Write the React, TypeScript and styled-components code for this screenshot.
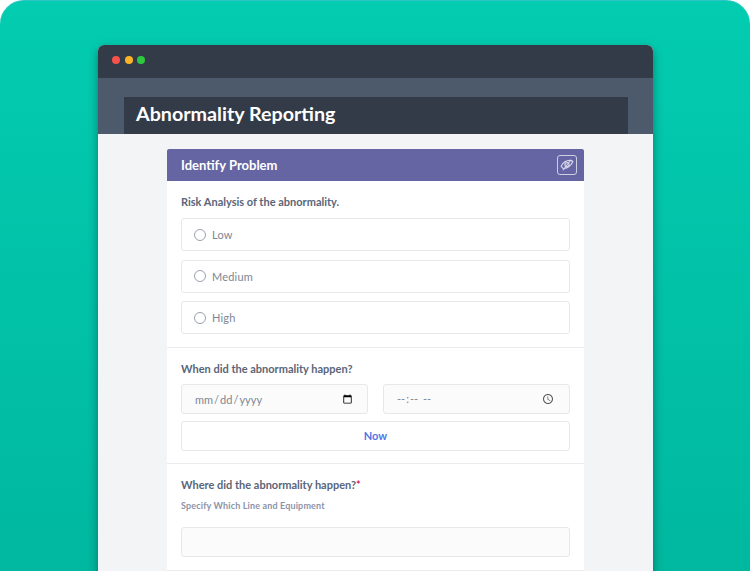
import styled, { createGlobalStyle } from "styled-components"

const GlobalStyle = createGlobalStyle`
  html, body {
    margin: 0;
    height: 100%;
    background: #fff;
    font-family: Lato, "Open Sans", sans-serif;
    overflow: hidden;
  }
`

const Stage = styled.div`
  width: 750px;
  height: 571px;
  box-sizing: border-box;
  padding: 45px 97px 0 98px;
  overflow: hidden;
  border-radius: 24px 24px 0 0;
  border-top: 1px solid #2cc4c4;
  background: linear-gradient(180deg, #03ccb0 0%, #00b89f 100%);
`

const Window = styled.div`
  margin-top: -1px;
  height: 560px;
  border-radius: 6px 6px 0 0;
  background: #f3f4f6;
  box-shadow: 0 4px 10px rgba(0, 50, 50, 0.5);
  overflow: hidden;
`

const TitleBar = styled.div`
  height: 33px;
  box-sizing: border-box;
  padding: 0 0 4px 14px;
  display: flex;
  align-items: center;
  gap: 4.5px;
  background: #323b47;
`

const Dot = styled.span<{ color: string }>`
  width: 8px;
  height: 8px;
  border-radius: 50%;
  background: ${(props) => props.color};
`

const Header = styled.div`
  height: 56px;
  box-sizing: border-box;
  padding: 19px 25px 0 26px;
  background: #4c5a6c;
`

const PageTitle = styled.h1`
  margin: 0;
  height: 37px;
  padding: 0 12px;
  line-height: 34px;
  font-size: 19.7px;
  font-weight: 700;
  color: #fff;
  background: #323b47;
`

const Content = styled.div`
  padding: 15px 69px 0;
`

const Card = styled.div`
  width: 417px;
  background: #fff;
`

const CardHeader = styled.div`
  height: 32px;
  box-sizing: border-box;
  padding: 0 7px 0 14px;
  display: flex;
  align-items: center;
  justify-content: space-between;
  border-radius: 2px 2px 0 0;
  background: #6665a3;
  color: #fff;
  font-size: 13px;
  font-weight: 700;
`

const IconButton = styled.span`
  width: 20px;
  height: 20px;
  box-sizing: border-box;
  display: flex;
  align-items: center;
  justify-content: center;
  border: 1px solid #cfcfe4;
  border-radius: 3px;
  color: #d6d6e8;
`

const Section = styled.div<{ $pad: string }>`
  padding: ${(props) => props.$pad};
  border-bottom: 1px solid #e9ebee;
`

const Question = styled.div<{ $gap: number }>`
  margin-bottom: ${(props) => props.$gap}px;
  line-height: 14px;
  font-size: 11px;
  font-weight: 700;
  color: #5a6578;
`

const Required = styled.span`
  color: #e0245e;
`

const Hint = styled.div`
  margin-bottom: 15px;
  line-height: 12px;
  font-size: 9px;
  font-weight: 700;
  letter-spacing: 0.15px;
  color: #8d93a8;
`

const Options = styled.div`
  display: flex;
  flex-direction: column;
  gap: 8.5px;
`

const Option = styled.label`
  height: 33px;
  box-sizing: border-box;
  padding-left: 12px;
  display: flex;
  align-items: center;
  gap: 6px;
  border: 1px solid #e6e8eb;
  border-radius: 3px;
  font-size: 11px;
  letter-spacing: 0.2px;
  color: #7d8694;
`

const Radio = styled.span`
  width: 12px;
  height: 12px;
  box-sizing: border-box;
  border: 1px solid #9aa2ac;
  border-radius: 50%;
`

const Row = styled.div`
  display: grid;
  grid-template-columns: 187px 187px;
  justify-content: space-between;
  margin-bottom: 7px;
`

const Field = styled.input`
  width: 100%;
  height: 30px;
  box-sizing: border-box;
  padding: 0 12px;
  display: block;
  border: 1px solid #e6e8eb;
  border-radius: 3px;
  background: #fbfbfb;
  font-family: Lato, sans-serif;
  font-size: 11px;
  color: #7d8694;
  outline: none;

  &[type="time"]::-webkit-calendar-picker-indicator {
    opacity: 0.65;
  }
`

const NowButton = styled.button`
  width: 100%;
  height: 30px;
  padding: 0 0 2px;
  display: block;
  border: 1px solid #e6e8eb;
  border-radius: 3px;
  background: #fff;
  font-family: Lato, sans-serif;
  font-size: 11px;
  font-weight: 700;
  color: #4f75e8;
`

const EyeOffIcon = () => (
  <svg width="14" height="14" viewBox="0 0 24 24" fill="none" stroke="currentColor" strokeWidth="2">
    <path d="M2 14c3-6 9-10 15-10 2 0 4 1 5 2-2 6-9 12-15 12-2 0-4-2-5-4z" />
    <circle cx="12" cy="11.5" r="3.5" />
    <path d="M19 3L5 21" />
  </svg>
)

const App = () => {
  return (
    <>
      <GlobalStyle />
      <Stage>
        <Window>
          <TitleBar>
            <Dot color="#f5524c" />
            <Dot color="#fbb425" />
            <Dot color="#2ec840" />
          </TitleBar>
          <Header>
            <PageTitle>Abnormality Reporting</PageTitle>
          </Header>
          <Content>
            <Card>
              <CardHeader>
                Identify Problem
                <IconButton>
                  <EyeOffIcon />
                </IconButton>
              </CardHeader>
              <Section $pad="14px 14px 13px">
                <Question $gap={9}>Risk Analysis of the abnormality.</Question>
                <Options>
                  <Option>
                    <Radio />
                    Low
                  </Option>
                  <Option>
                    <Radio />
                    Medium
                  </Option>
                  <Option>
                    <Radio />
                    High
                  </Option>
                </Options>
              </Section>
              <Section $pad="14px 14px 12px">
                <Question $gap={8}>When did the abnormality happen?</Question>
                <Row>
                  <Field type="date" />
                  <Field type="time" />
                </Row>
                <NowButton>Now</NowButton>
              </Section>
              <Section $pad="14px 14px 13px">
                <Question $gap={8}>
                  Where did the abnormality happen?<Required>*</Required>
                </Question>
                <Hint>Specify Which Line and Equipment</Hint>
                <Field type="text" />
              </Section>
            </Card>
          </Content>
        </Window>
      </Stage>
    </>
  )
}

export default App
